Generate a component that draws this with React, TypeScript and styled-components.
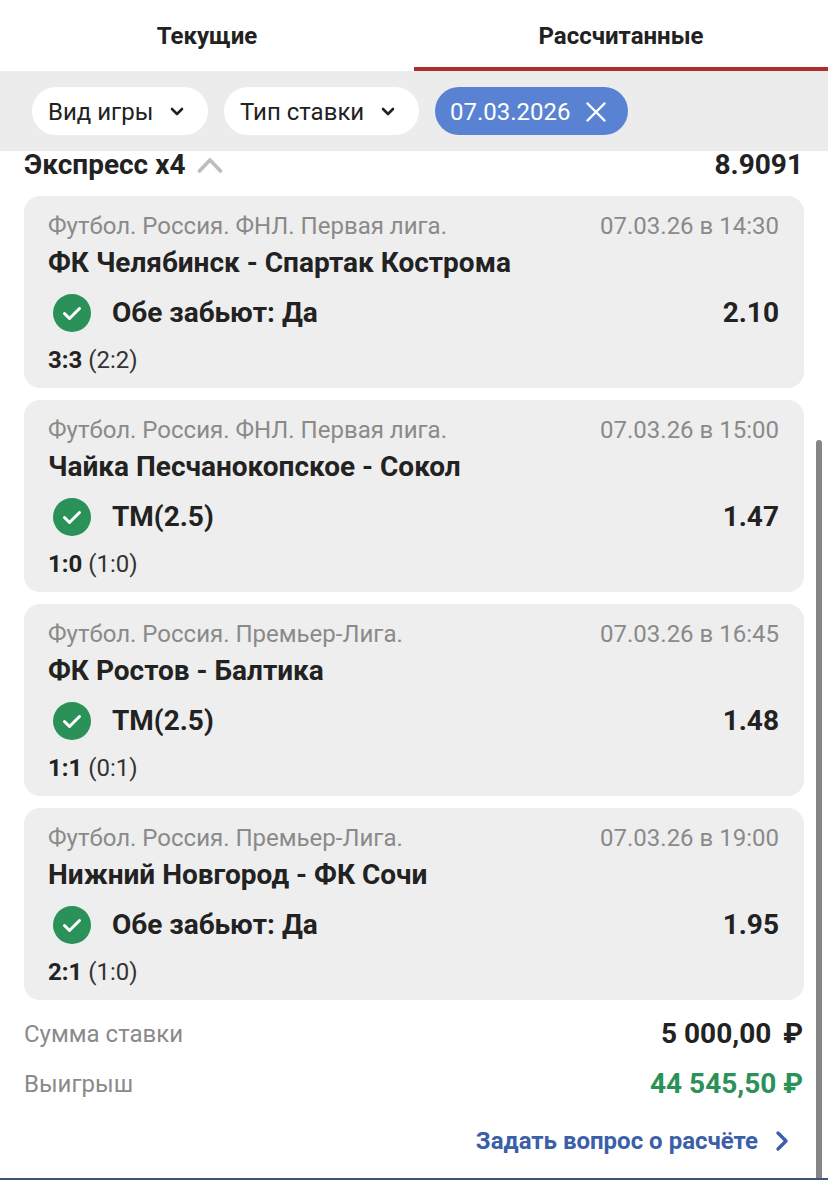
import React from "react";
import styled, { createGlobalStyle } from "styled-components";

const Global = createGlobalStyle`
  html, body { margin: 0; padding: 0; background: #fff; }
  body { font-family: Roboto, "Noto Sans", sans-serif; color: #222; }
`;

const Page = styled.div`
  position: relative;
  width: 828px;
  height: 1180px;
  overflow: hidden;
  background: #fff;
  display: flex;
  flex-direction: column;
`;

const Tabs = styled.div`
  display: grid;
  grid-template-columns: 414px 414px;
  height: 71px;
`;

const Tab = styled.div<{ $active?: boolean }>`
  display: flex;
  align-items: center;
  justify-content: center;
  box-sizing: border-box;
  font-size: 24px;
  font-weight: 700;
  color: #222;
  padding-top: ${(p) => (p.$active ? "4px" : "0")};
  border-bottom: ${(p) => (p.$active ? "4px solid #ad2e2e" : "none")};
`;

const Filters = styled.div`
  height: 80px;
  box-sizing: border-box;
  background: #ececec;
  padding: 16px 32px;
  display: flex;
  gap: 16px;
`;

const Pill = styled.div<{ $width: number; $selected?: boolean }>`
  width: ${(p) => p.$width}px;
  height: 48px;
  box-sizing: border-box;
  border-radius: 24px;
  padding: ${(p) => (p.$selected ? "1px 21px 0 15px" : "1px 24px 0 16px")};
  display: flex;
  align-items: center;
  justify-content: space-between;
  font-size: 24px;
  background: ${(p) => (p.$selected ? "#5a82d2" : "#fff")};
  color: ${(p) => (p.$selected ? "#fff" : "#222")};
`;

const Header = styled.div`
  height: 45px;
  padding: 0 25px 0 24px;
  display: flex;
  justify-content: space-between;
  align-items: flex-start;
  font-size: 28px;
  font-weight: 700;
  line-height: 28px;
`;

const HeaderTitle = styled.div`
  display: flex;
  align-items: center;
  gap: 12px;
`;

const Cards = styled.div`
  display: flex;
  flex-direction: column;
  gap: 12px;
  padding: 0 24px;
`;

const Card = styled.div`
  height: 192px;
  box-sizing: border-box;
  background: #eeeeee;
  border-radius: 16px;
  padding: 16px 25px 0 24px;
`;

const MetaRow = styled.div`
  display: flex;
  justify-content: space-between;
  font-size: 24px;
  line-height: 28px;
  color: #8a8a8a;
`;

const Match = styled.div`
  margin-top: 7px;
  font-size: 28px;
  line-height: 32px;
  font-weight: 700;
  color: #222;
`;

const BetRow = styled.div`
  margin-top: 15px;
  display: flex;
  align-items: center;
  justify-content: space-between;
  height: 38px;
  font-size: 28px;
  font-weight: 700;
`;

const BetName = styled.div`
  display: flex;
  align-items: center;
  gap: 21px;
  padding-left: 5px;
`;

const BetText = styled.span`
  margin-bottom: 2px;
`;

const Score = styled.div`
  margin-top: 14px;
  font-size: 24px;
  line-height: 28px;
  color: #333;
  b { font-weight: 700; color: #222; }
`;

const Summary = styled.div`
  display: flex;
  flex-direction: column;
  padding: 18px 25px 0 24px;
`;

const SummaryRow = styled.div`
  height: 50px;
  display: flex;
  justify-content: space-between;
  align-items: flex-start;
`;

const SummaryLabel = styled.div`
  font-size: 24px;
  line-height: 32px;
  color: #8a8a8a;
`;

const SummaryValue = styled.div<{ $win?: boolean }>`
  font-size: 28px;
  line-height: 32px;
  font-weight: 700;
  color: ${(p) => (p.$win ? "#2a9158" : "#222")};
`;

const Currency = styled.span`
  margin-left: 5px;
`;

const AskLink = styled.div`
  margin-top: 7px;
  padding-right: 14px;
  display: flex;
  justify-content: flex-end;
  align-items: center;
  gap: 17px;
  font-size: 24px;
  line-height: 32px;
  font-weight: 700;
  color: #3b5fa8;
`;

const Scrollbar = styled.div`
  position: absolute;
  left: 816px;
  top: 440px;
  bottom: 0;
  width: 6px;
  border-radius: 3px 3px 0 0;
  background: #858585;
`;

const BottomLine = styled.div`
  position: absolute;
  left: 0;
  right: 0;
  bottom: 0;
  height: 2px;
  background: #3f5476;
`;

const DownChevron = () => (
  <svg width="14" height="10" viewBox="0 0 14 10" fill="none">
    <path d="M2 2 L7 7 L12 2" stroke="#222" strokeWidth="2.6" strokeLinecap="round" strokeLinejoin="round" />
  </svg>
);

const UpChevron = () => (
  <svg width="26" height="16" viewBox="0 0 26 16" fill="none">
    <path d="M2.5 14 L13 3 L23.5 14" stroke="#bdbdbd" strokeWidth="3.6" strokeLinecap="round" strokeLinejoin="round" />
  </svg>
);

const Check = () => (
  <svg width="38" height="38" viewBox="0 0 38 38">
    <circle cx="19" cy="19" r="19" fill="#2a9158" />
    <path d="M11.5 19.5 L16.5 24.5 L26.5 14.5" fill="none" stroke="#fff" strokeWidth="3" strokeLinecap="round" strokeLinejoin="round" />
  </svg>
);

const Close = () => (
  <svg width="22" height="22" viewBox="0 0 22 22" fill="none">
    <path d="M2.5 2.5 L19.5 19.5 M19.5 2.5 L2.5 19.5" stroke="#fff" strokeWidth="2.4" strokeLinecap="round" />
  </svg>
);

const RightChevron = () => (
  <svg width="14" height="22" viewBox="0 0 14 22" fill="none">
    <path d="M3 3 L11 11 L3 19" stroke="#3b5fa8" strokeWidth="3.4" strokeLinecap="round" strokeLinejoin="round" />
  </svg>
);

const bets = [
  { league: "Футбол. Россия. ФНЛ. Первая лига.", time: "07.03.26 в 14:30", match: "ФК Челябинск - Спартак Кострома", bet: "Обе забьют: Да", odd: "2.10", score: "3:3", half: "(2:2)" },
  { league: "Футбол. Россия. ФНЛ. Первая лига.", time: "07.03.26 в 15:00", match: "Чайка Песчанокопское - Сокол", bet: "ТМ(2.5)", odd: "1.47", score: "1:0", half: "(1:0)" },
  { league: "Футбол. Россия. Премьер-Лига.", time: "07.03.26 в 16:45", match: "ФК Ростов - Балтика", bet: "ТМ(2.5)", odd: "1.48", score: "1:1", half: "(0:1)" },
  { league: "Футбол. Россия. Премьер-Лига.", time: "07.03.26 в 19:00", match: "Нижний Новгород - ФК Сочи", bet: "Обе забьют: Да", odd: "1.95", score: "2:1", half: "(1:0)" },
];

export default function App() {
  return (
    <Page>
      <Global />
      <Tabs>
        <Tab>Текущие</Tab>
        <Tab $active>Рассчитанные</Tab>
      </Tabs>
      <Filters>
        <Pill $width={176}>
          Вид игры <DownChevron />
        </Pill>
        <Pill $width={195}>
          Тип ставки <DownChevron />
        </Pill>
        <Pill $width={193} $selected>
          07.03.2026 <Close />
        </Pill>
      </Filters>
      <Header>
        <HeaderTitle>
          Экспресс x4 <UpChevron />
        </HeaderTitle>
        <div>8.9091</div>
      </Header>
      <Cards>
        {bets.map((b) => (
          <Card key={b.time}>
            <MetaRow>
              <div>{b.league}</div>
              <div>{b.time}</div>
            </MetaRow>
            <Match>{b.match}</Match>
            <BetRow>
              <BetName>
                <Check />
                <BetText>{b.bet}</BetText>
              </BetName>
              <BetText>{b.odd}</BetText>
            </BetRow>
            <Score>
              <b>{b.score}</b> {b.half}
            </Score>
          </Card>
        ))}
      </Cards>
      <Summary>
        <SummaryRow>
          <SummaryLabel>Сумма ставки</SummaryLabel>
          <SummaryValue>
            5 000,00 <Currency>₽</Currency>
          </SummaryValue>
        </SummaryRow>
        <SummaryRow>
          <SummaryLabel>Выигрыш</SummaryLabel>
          <SummaryValue $win>44 545,50 ₽</SummaryValue>
        </SummaryRow>
        <AskLink>
          Задать вопрос о расчёте <RightChevron />
        </AskLink>
      </Summary>
      <Scrollbar />
      <BottomLine />
    </Page>
  );
}
